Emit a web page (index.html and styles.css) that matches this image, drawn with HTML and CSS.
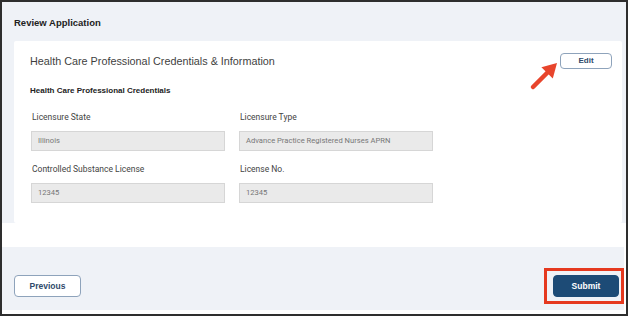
FILE: index.html
```html
<!DOCTYPE html>
<html>
<head>
    <title>Review Application</title>
    <link rel="stylesheet" href="styles.css">
</head>
<body>
    <div class="frame">
        <div class="review">
            <h2 class="review-title">Review Application</h2>

            <div class="card">
                <div class="card-head">
                    <h3 class="card-title">Health Care Professional Credentials &amp; Information</h3>
                    <button class="btn btn-outline btn-edit">Edit</button>
                </div>

                <h4 class="section-title">Health Care Professional Credentials</h4>

                <div class="fields">
                    <div class="field">
                        <label>Licensure State</label>
                        <div class="input">Illinois</div>
                    </div>
                    <div class="field">
                        <label>Licensure Type</label>
                        <div class="input">Advance Practice Registered Nurses APRN</div>
                    </div>
                    <div class="field">
                        <label>Controlled Substance License</label>
                        <div class="input">12345</div>
                    </div>
                    <div class="field">
                        <label>License No.</label>
                        <div class="input">12345</div>
                    </div>
                </div>
            </div>
        </div>

        <div class="footer">
            <button class="btn btn-outline btn-prev">Previous</button>
            <button class="btn btn-primary">Submit</button>
        </div>

        <!-- annotations -->
        <svg class="arrow" width="34" height="34" viewBox="0 0 34 34">
            <line x1="5" y1="29" x2="20" y2="14" stroke="#e8452c" stroke-width="4.5" stroke-linecap="round"/>
            <polygon points="29,5 24.8,20.6 13.4,9.2" fill="#e8452c"/>
        </svg>
        <div class="highlight"></div>
    </div>
</body>
</html>
```

FILE: styles.css
```css
* {
    box-sizing: border-box;
}

body {
    margin: 0;
    font-family: Roboto, "Liberation Sans", Arial, sans-serif;
    background: #fff;
}

.frame {
    position: relative;
    width: 628px;
    height: 316px;
    border: 2px solid #2e2e2e;
    background: #fff;
    display: flex;
    flex-direction: column;
}

.review {
    background: #eff2f7;
    padding: 13px 4px 0 12px;
}

.review-title {
    margin: 0 0 11px 0;
    font-family: "Liberation Sans", Arial, sans-serif;
    font-size: 9.5px;
    font-weight: bold;
    color: #222;
    line-height: 15px;
}

.card {
    background: #fff;
    border-radius: 2px;
    height: 182px;
    padding: 12px 10px 0 16px;
}

.card-head {
    display: flex;
    justify-content: space-between;
    align-items: center;
}

.card-title {
    margin: 0;
    font-family: "Liberation Sans", Arial, sans-serif;
    font-size: 10.8px;
    font-weight: normal;
    color: #3f3f3f;
    line-height: 16px;
}

.section-title {
    margin: 16px 0 0 0;
    font-family: "Liberation Sans", Arial, sans-serif;
    font-size: 8px;
    font-weight: bold;
    color: #222;
    line-height: 12px;
}

.fields {
    display: grid;
    grid-template-columns: 194px 194px;
    column-gap: 14px;
    row-gap: 12px;
    padding: 14px 0 0 1px;
}

.field label {
    display: block;
    font-size: 8.5px;
    color: #444;
    line-height: 12px;
    margin-bottom: 8px;
    padding-left: 1px;
}

.field .input {
    height: 20px;
    background: #eaeaea;
    border: 1px solid #d6d6d6;
    font-size: 7.6px;
    color: #777;
    line-height: 18px;
    padding-left: 6px;
}

.footer {
    margin-top: 24px;
    margin-right: 2px;
    height: 63px;
    background: #eff2f7;
    display: flex;
    justify-content: space-between;
    align-items: flex-end;
    padding: 0 5px 13px 12px;
}

.btn {
    font-family: "Liberation Sans", Arial, sans-serif;
    font-weight: bold;
    border-radius: 4px;
    cursor: pointer;
    padding: 0;
}

.btn-outline {
    background: #fff;
    border: 1.5px solid #8ea3bb;
    color: #2f4a6b;
}

.btn-edit {
    width: 52px;
    height: 16px;
    font-size: 8px;
    margin-top: -1px;
}

.btn-prev {
    width: 67px;
    height: 22px;
    font-size: 8.5px;
}

.btn-primary {
    width: 66px;
    height: 22px;
    font-size: 8.5px;
    background: #1d4b76;
    border: 1px solid #1d4b76;
    color: #fff;
}

.arrow {
    position: absolute;
    left: 526px;
    top: 56px;
}

.highlight {
    position: absolute;
    left: 542px;
    top: 266px;
    width: 80px;
    height: 36px;
    border: 3px solid #e5391f;
}
```
